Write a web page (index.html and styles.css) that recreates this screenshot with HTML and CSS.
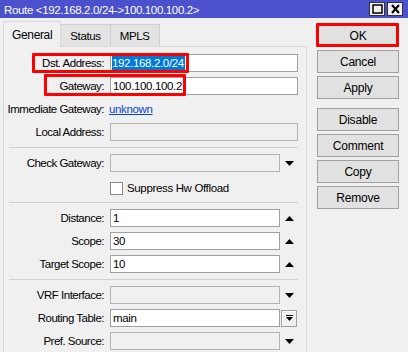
FILE: index.html
```html
<!DOCTYPE html>
<html lang="en">
<head>
    <meta charset="UTF-8">
    <meta name="viewport" content="width=device-width, initial-scale=1.0">
    <link rel="stylesheet" href="styles.css">
    <title>Route</title>
</head>
<body>
    <div class="window">
        <div class="titlebar">
            <span class="title">Route &lt;192.168.2.0/24-&gt;100.100.100.2&gt;</span>
            <div class="winbtns">
                <span class="winbtn">
                    <svg width="11" height="10" viewBox="0 0 11 10"><rect x="1" y="1" width="9" height="8" fill="none" stroke="#000" stroke-width="1.5"/></svg>
                </span>
                <span class="winbtn">
                    <svg width="11" height="10" viewBox="0 0 11 10"><path d="M2 1 L9 9 M9 1 L2 9" stroke="#000" stroke-width="2"/></svg>
                </span>
            </div>
        </div>

        <div class="main">
            <div class="tabs-area">
                <div class="tabs">
                    <div class="tab active">General</div>
                    <div class="tab">Status</div>
                    <div class="tab">MPLS</div>
                </div>

                <div class="page">
                    <div class="row">
                        <label>Dst. Address:</label>
                        <div class="field"><div class="input"><span class="sel">192.168.2.0/24</span></div></div>
                        <span class="mark mark-dst"></span>
                    </div>
                    <div class="row">
                        <label>Gateway:</label>
                        <div class="field"><div class="input">100.100.100.2</div></div>
                        <span class="mark mark-gw"></span>
                    </div>
                    <div class="row">
                        <label>Immediate Gateway:</label>
                        <div class="field"><a class="link" href="#">unknown</a></div>
                    </div>
                    <div class="row">
                        <label>Local Address:</label>
                        <div class="field"><div class="input off"></div></div>
                    </div>

                    <div class="sep"></div>

                    <div class="row">
                        <label>Check Gateway:</label>
                        <div class="field">
                            <div class="input off"></div>
                            <span class="arrow"><svg width="9" height="5" viewBox="0 0 9 5"><polygon points="0,0 9,0 4.5,5" fill="#000"/></svg></span>
                        </div>
                    </div>
                    <div class="row tall">
                        <label></label>
                        <div class="field check"><span class="box"></span>Suppress Hw Offload</div>
                    </div>

                    <div class="sep"></div>

                    <div class="row">
                        <label>Distance:</label>
                        <div class="field">
                            <div class="input">1</div>
                            <span class="arrow"><svg width="9" height="5" viewBox="0 0 9 5"><polygon points="0,5 9,5 4.5,0" fill="#000"/></svg></span>
                        </div>
                    </div>
                    <div class="row">
                        <label>Scope:</label>
                        <div class="field">
                            <div class="input">30</div>
                            <span class="arrow"><svg width="9" height="5" viewBox="0 0 9 5"><polygon points="0,5 9,5 4.5,0" fill="#000"/></svg></span>
                        </div>
                    </div>
                    <div class="row">
                        <label>Target Scope:</label>
                        <div class="field">
                            <div class="input">10</div>
                            <span class="arrow"><svg width="9" height="5" viewBox="0 0 9 5"><polygon points="0,5 9,5 4.5,0" fill="#000"/></svg></span>
                        </div>
                    </div>

                    <div class="sep"></div>

                    <div class="row">
                        <label>VRF Interface:</label>
                        <div class="field">
                            <div class="input off"></div>
                            <span class="arrow"><svg width="9" height="5" viewBox="0 0 9 5"><polygon points="0,0 9,0 4.5,5" fill="#000"/></svg></span>
                        </div>
                    </div>
                    <div class="row">
                        <label>Routing Table:</label>
                        <div class="field">
                            <div class="input">main</div>
                            <span class="arrow small-btn"><svg width="7" height="7" viewBox="0 0 7 7"><rect x="0" y="0" width="7" height="1" fill="#000"/><polygon points="0,2 7,2 3.5,6" fill="#000"/></svg></span>
                        </div>
                    </div>
                    <div class="row">
                        <label>Pref. Source:</label>
                        <div class="field">
                            <div class="input off"></div>
                            <span class="arrow"><svg width="9" height="5" viewBox="0 0 9 5"><polygon points="0,0 9,0 4.5,5" fill="#000"/></svg></span>
                        </div>
                    </div>
                </div>
            </div>

            <div class="actions">
                <div class="btn-wrap">
                    <button class="btn">OK</button>
                    <span class="mark mark-ok"></span>
                </div>
                <button class="btn">Cancel</button>
                <button class="btn">Apply</button>
                <button class="btn group">Disable</button>
                <button class="btn">Comment</button>
                <button class="btn">Copy</button>
                <button class="btn">Remove</button>
            </div>
        </div>
    </div>
</body>
</html>
```

FILE: styles.css
```css
body {
    margin: 0;
    font-family: "Liberation Sans", Arial, sans-serif;
    font-size: 11.5px;
    letter-spacing: -0.35px;
    color: #000;
}

.window {
    width: 408px;
    height: 352px;
    background-color: #f0f0f0;
    overflow: hidden;
    display: flex;
    flex-direction: column;
}

.titlebar {
    height: 18px;
    flex: none;
    background-color: #4b50cd;
    color: #fff;
    display: flex;
    align-items: center;
    padding-left: 4px;
}

.title {
    flex: 1;
    padding-top: 1px;
    font-size: 11.5px;
}

.winbtns {
    display: flex;
    gap: 2px;
    margin-right: 5px;
}

.winbtn {
    width: 14px;
    height: 12px;
    background-color: #f0f0f0;
    border: 1px solid #333;
    display: flex;
    align-items: center;
    justify-content: center;
}

.main {
    flex: 1;
    display: flex;
}

.tabs-area {
    width: 304px;
    margin-left: 3px;
    padding-top: 3px;
    display: flex;
    flex-direction: column;
}

.tabs {
    display: flex;
    align-items: flex-end;
    height: 25px;
    padding-left: 1px;
}

.tab {
    height: 21px;
    padding: 0 9px;
    background-color: #e3e3e3;
    border: 1px solid #d0d0d0;
    border-bottom: none;
    display: flex;
    align-items: center;
    margin-left: -1px;
}

.tab.active {
    height: 25px;
    padding: 0 8px;
    background-color: #f0f0f0;
    border-color: #d9d9d9;
    margin-bottom: -1px;
    position: relative;
    z-index: 1;
    font-size: 12px;
}

.page {
    flex: 1;
    border: 1px solid #d9d9d9;
    border-bottom: none;
    padding: 7px 7px 0 0;
    display: flex;
    flex-direction: column;
    gap: 5px;
}

.row {
    position: relative;
    display: flex;
    align-items: center;
    height: 18px;
}

.row.tall {
    height: 19px;
}

.row label {
    width: 100px;
    text-align: right;
    margin-right: 6px;
    white-space: nowrap;
    letter-spacing: -0.5px;
}

.field {
    width: 188px;
    height: 18px;
    display: flex;
    align-items: center;
}

.input {
    flex: 1;
    height: 16px;
    background-color: #fff;
    border: 1px solid #a0a0a0;
    padding-left: 2px;
    display: flex;
    align-items: center;
}

.input.off {
    background-color: #f0f0f0;
    border-color: #b4b4b4;
}

.sel {
    background-color: #0078d7;
    color: #fff;
    padding: 1px 1px 2px 0;
    margin-left: -1px;
}

.arrow {
    width: 17px;
    height: 18px;
    display: flex;
    align-items: center;
    justify-content: center;
    margin-left: 1px;
}

.small-btn {
    width: 14px;
    height: 15px;
    margin-left: 1px;
    margin-right: 1px;
    border: 1px solid #a0a0a0;
    box-shadow: inset 1px 1px 0 #fff;
}

.link {
    color: #0645d6;
    margin-left: -1px;
}

.check {
    padding-top: 3px;
}

.box {
    width: 11px;
    height: 11px;
    background-color: #fff;
    border: 1px solid #8a8a8a;
    margin-right: 4px;
}

.sep {
    height: 0;
    border-top: 1px solid #d0d0d0;
    margin: 1px 0 1px 5px;
    width: 289px;
}

.actions {
    margin-left: 10px;
    padding-top: 6px;
    display: flex;
    flex-direction: column;
    gap: 3px;
}

.btn {
    width: 82px;
    height: 23px;
    font-family: "Liberation Sans", Arial, sans-serif;
    font-size: 12px;
    letter-spacing: -0.2px;
    background-color: #e1e1e1;
    border: 1px solid #a0a0a0;
    padding: 0;
    color: #000;
}

.btn.group {
    margin-top: 6px;
}

.btn-wrap {
    position: relative;
}

.mark {
    position: absolute;
    border: 3px solid #f00;
    border-radius: 1px;
    pointer-events: none;
}

.mark-ok {
    left: -1px;
    top: -1px;
    width: 77px;
    height: 18px;
}

.mark-dst {
    left: 28px;
    top: -1px;
    width: 151px;
    height: 14px;
}

.mark-gw {
    left: 40px;
    top: -3px;
    width: 136px;
    height: 16px;
}
```
